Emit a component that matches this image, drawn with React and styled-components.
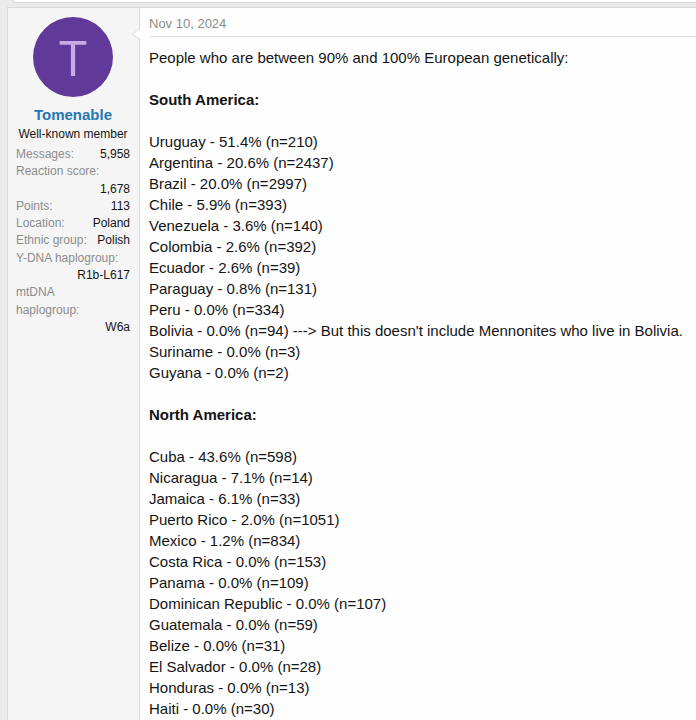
import React from 'react';
import styled, { createGlobalStyle } from 'styled-components';

const GlobalStyle = createGlobalStyle`
  html, body {
    margin: 0;
    padding: 0;
    background: #ebebeb;
  }
  body {
    font-family: 'Liberation Sans', Arial, sans-serif;
    color: #141414;
  }
`;

const Page = styled.div`
  width: 696px;
  height: 720px;
  overflow: hidden;
  background: #ebebeb;
`;

const PrevBlock = styled.div`
  height: 2px;
  margin-left: 12px;
  background: #fefefe;
  border: 1px solid #d8d8d8;
  border-top: none;
  border-right: none;
  border-bottom-left-radius: 4px;
`;

const Post = styled.article`
  display: flex;
  margin: 4px 0 0 7px;
  border: 1px solid #d8d8d8;
  border-right: none;
  background: #fefefe;
  min-height: 720px;
`;

const UserCell = styled.div`
  position: relative;
  flex: 0 0 132px;
  box-sizing: border-box;
  padding: 8px 9px 8px 8px;
  background: #f5f5f5;
  border-right: 1px solid #d8d8d8;
  display: flex;
  flex-direction: column;
  align-items: stretch;
`;

const Arrow = styled.span`
  position: absolute;
  top: 20px;
  right: -1px;
  width: 0;
  height: 0;
  border: 6px solid transparent;
  border-left-width: 0;
  border-right: 8px solid #d8d8d8;

  &::after {
    content: '';
    position: absolute;
    top: -5px;
    left: 1px;
    border: 5px solid transparent;
    border-left-width: 0;
    border-right: 7px solid #fefefe;
  }
`;

const Avatar = styled.div`
  align-self: center;
  width: 80px;
  height: 80px;
  border-radius: 50%;
  background: #613a99;
  color: #c8aae6;
  font-family: 'Open Sans', 'Liberation Sans', sans-serif;
  font-weight: 400;
  font-size: 50px;
  line-height: 80px;
  text-align: center;
  margin-top: 1px;
`;

const UserName = styled.a`
  display: block;
  margin-top: 8px;
  text-align: center;
  font-weight: 700;
  font-size: 15px;
  line-height: 20px;
  color: #2577b1;
  text-decoration: none;
`;

const UserTitle = styled.div`
  text-align: center;
  font-size: 12px;
  line-height: 16px;
  color: #141414;
  margin-top: 1px;
`;

const Stats = styled.dl`
  margin: 4px 0 0;
  font-size: 12px;
  line-height: 17.3px;
`;

const StatRow = styled.div`
  display: flex;
  flex-wrap: wrap;
  justify-content: space-between;
`;

const StatLabel = styled.dt`
  color: #8c8c8c;
  margin: 0;
  flex-basis: ${p => (p.$full ? '100%' : 'auto')};
`;

const StatValue = styled.dd`
  margin: 0 0 0 auto;
  color: #141414;
  text-align: right;
`;

const Main = styled.div`
  flex: 1;
  min-width: 0;
  padding: 6px 0 0 9px;
`;

const Attribution = styled.header`
  font-size: 13px;
  line-height: 20px;
  color: #8c8c8c;
  padding-bottom: 2px;
  border-bottom: 1px solid #e2e2e2;
`;

const Body = styled.div`
  padding-top: 10px;
  font-size: 15px;
  line-height: 21px;
  color: #141414;
  white-space: nowrap;
`;

const Line = styled.div`
  min-height: 21px;
  font-weight: ${p => (p.$bold ? 700 : 400)};
`;

const stats = [
  ['Messages:', '5,958'],
  ['Reaction score:', '1,678', true],
  ['Points:', '113'],
  ['Location:', 'Poland'],
  ['Ethnic group:', 'Polish'],
  ['Y-DNA haplogroup:', 'R1b-L617', true],
  [<>mtDNA<br />haplogroup:</>, 'W6a', true],
];

const south = [
  'Uruguay - 51.4% (n=210)',
  'Argentina - 20.6% (n=2437)',
  'Brazil - 20.0% (n=2997)',
  'Chile - 5.9% (n=393)',
  'Venezuela - 3.6% (n=140)',
  'Colombia - 2.6% (n=392)',
  'Ecuador - 2.6% (n=39)',
  'Paraguay - 0.8% (n=131)',
  'Peru - 0.0% (n=334)',
  "Bolivia - 0.0% (n=94) ---> But this doesn't include Mennonites who live in Bolivia.",
  'Suriname - 0.0% (n=3)',
  'Guyana - 0.0% (n=2)',
];

const north = [
  'Cuba - 43.6% (n=598)',
  'Nicaragua - 7.1% (n=14)',
  'Jamaica - 6.1% (n=33)',
  'Puerto Rico - 2.0% (n=1051)',
  'Mexico - 1.2% (n=834)',
  'Costa Rica - 0.0% (n=153)',
  'Panama - 0.0% (n=109)',
  'Dominican Republic - 0.0% (n=107)',
  'Guatemala - 0.0% (n=59)',
  'Belize - 0.0% (n=31)',
  'El Salvador - 0.0% (n=28)',
  'Honduras - 0.0% (n=13)',
  'Haiti - 0.0% (n=30)',
];

export default function App() {
  return (
    <Page>
      <GlobalStyle />
      <PrevBlock />
      <Post>
        <UserCell>
          <Avatar>T</Avatar>
          <UserName href="#">Tomenable</UserName>
          <UserTitle>Well-known member</UserTitle>
          <Stats>
            {stats.map(([label, value, wrap], i) => (
              <StatRow key={i}>
                <StatLabel $full={wrap}>{label}</StatLabel>
                <StatValue>{value}</StatValue>
              </StatRow>
            ))}
          </Stats>
          <Arrow />
        </UserCell>
        <Main>
          <Attribution>Nov 10, 2024</Attribution>
          <Body>
            <Line>People who are between 90% and 100% European genetically:</Line>
            <Line />
            <Line $bold>South America:</Line>
            <Line />
            {south.map(t => <Line key={t}>{t}</Line>)}
            <Line />
            <Line $bold>North America:</Line>
            <Line />
            {north.map(t => <Line key={t}>{t}</Line>)}
          </Body>
        </Main>
      </Post>
    </Page>
  );
}
